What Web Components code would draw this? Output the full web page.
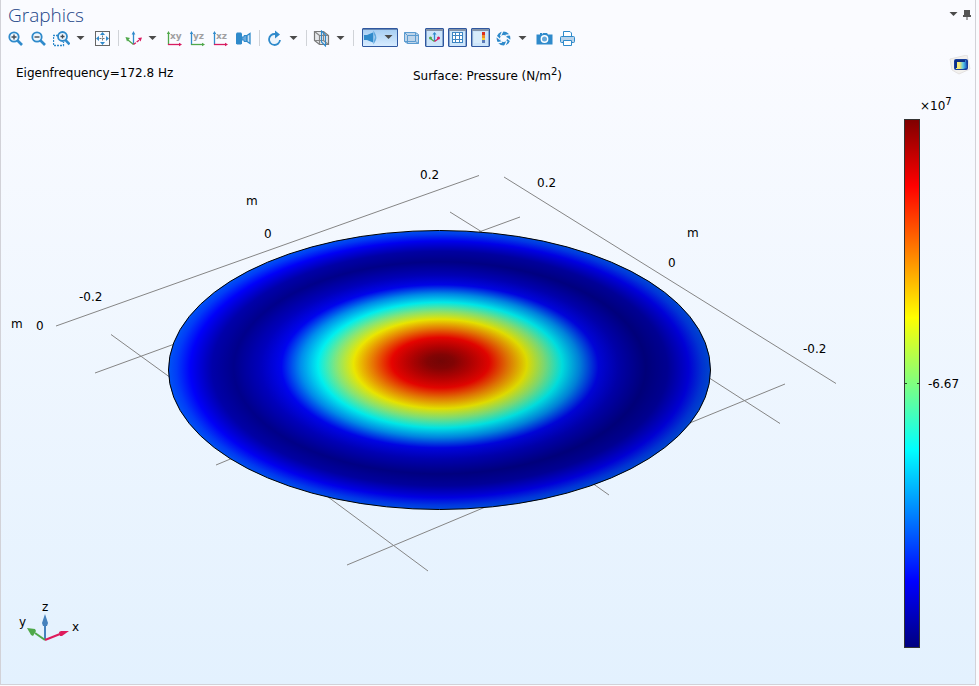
<!DOCTYPE html>
<html lang="en">
<head>
<meta charset="utf-8">
<title>Graphics</title>
<style>
html, body { height: 100%; }
body { margin: 0; background: #fbfbfe; font: 12px "DejaVu Sans", sans-serif; color: #000; }
</style>
</head>
<body>
<graphics-window></graphics-window>
<script>
const BLUE = '#2f8acb';
const GREEN = '#4fa84a', RED = '#d81b60';
const lens = inner => `<circle cx="7" cy="7" r="4.7" fill="#eef6fd" stroke="${BLUE}" stroke-width="1.8"/><path d="M10.5 10.5L15 15" stroke="${BLUE}" stroke-width="2.6"/><path d="${inner}" stroke="#444c54" stroke-width="1.4"/>`;
const plane = (label, up, side) => `<path d="M2.5 15V3" stroke="${up}" stroke-width="1.3"/><path d="M.8 4L2.5 1L4.2 4Z" fill="${up}"/><path d="M2 14.5H14" stroke="${side}" stroke-width="1.3"/><path d="M13 12.8L16 14.5L13 16.2Z" fill="${side}"/><text x="4" y="9" font-family="DejaVu Sans" font-weight="bold" font-size="9" fill="#a0a0a2">${label}</text>`;
const ICONS = {
  zoomIn: lens('M4.5 7H9.5M7 4.5V9.5'),
  zoomOut: lens('M4.5 7H9.5'),
  zoomBox: `<path d="M5 5.5H.5V15.5H10.5V12" stroke="${BLUE}" stroke-width="1.3" stroke-dasharray="2 1"/><circle cx="9.5" cy="6.5" r="4.5" fill="#eef6fd" stroke="${BLUE}" stroke-width="1.8"/><path d="M12.5 10L16.5 14.5" stroke="${BLUE}" stroke-width="2.6"/><path d="M7.5 6.5H11.5M9.5 4.5V8.5" stroke="#444c54" stroke-width="1.3"/>`,
  extents: `<rect x="1.5" y="1.5" width="14" height="14" stroke="#666"/><path d="M8.5 5.5V11.5M5.5 8.5H11.5" stroke="#777" stroke-dasharray="2 1"/><path d="M8.5 2L11 5H6ZM8.5 15L11 12H6ZM2 8.5L5 6V11ZM15 8.5L12 6V11Z" fill="${BLUE}"/>`,
  axes: `<path d="M8.5 14V3" stroke="${BLUE}" stroke-width="1.3"/><path d="M6.7 4.5L8.5 1L10.3 4.5Z" fill="${BLUE}"/><path d="M8.5 14.5L3 10" stroke="${GREEN}" stroke-width="1.3"/><path d="M.5 7L5 8L2 11.5Z" fill="${GREEN}"/><path d="M8.5 14.5L15 9.5" stroke="${RED}" stroke-width="1.3" stroke-dasharray="3 1"/><path d="M17 7.5L13 8L15.5 11.5Z" fill="${RED}"/>`,
  axesSmall: `<path d="M8.5 12V4" stroke="${BLUE}" stroke-width="1.3"/><path d="M6.5 5.5L8.5 3L10.5 5.5Z" fill="${BLUE}"/><path d="M8.5 12.5L5 10M8.5 12.5L5 10" stroke="${GREEN}" stroke-width="1.3"/><circle cx="4.5" cy="9" r="1.5" fill="${GREEN}"/><path d="M8.5 12.5L12 10" stroke="${RED}" stroke-width="1.3"/><circle cx="12.5" cy="9" r="1.5" fill="${RED}"/>`,
  xy: plane('xy', GREEN, RED),
  yz: plane('yz', BLUE, GREEN),
  xz: plane('xz', BLUE, RED),
  view: `<path d="M2 2.5H6L7 3.5V13.5L6 14.5H2L1 13.5V3.5Z" fill="${BLUE}"/><path d="M7 7H9V5.5H12V11.5H9V10H7Z" fill="#6aa9dc" stroke="${BLUE}"/><path d="M12 5.5L15 3.5V13.5L12 11.5Z" fill="#cfe3f5" stroke="${BLUE}" stroke-width="1.3"/>`,
  refresh: `<path d="M9 4A5.5 5.5 0 1 0 14 10" fill="#eef5fc" stroke="${BLUE}" stroke-width="1.8"/><path d="M9 .5L14 4.5L9 8.5Z" fill="${BLUE}"/>`,
  cube: `<path d="M1.5 1.5H10.5L15.5 5.5V14.5H6.5L1.5 10.5Z" fill="#e6e8eb" stroke="#777" stroke-width="1.2"/><path d="M1.5 1.5L6.5 5.5H15.5M6.5 5.5V14.5M10.5 1.5V10.5H1.5M10.5 10.5L15.5 14.500" stroke="#858585" stroke-width="1.2"/><path d="M8.5 1V12L12.5 16V5Z" stroke="${BLUE}" stroke-width="1.1"/>`,
  light: `<path d="M1 6H4L10 3.500V13.500L4 11H1Z" fill="${BLUE}"/><path d="M11 3.500Q14.500 8.500 11 13.500Z" fill="#fff" stroke="#62a9df" stroke-width="1.2"/>`,
  box: `<path d="M1.5 2.5H12.5L15.5 4.5V13.5H4.5L1.5 11.5Z" fill="#bdd4ea" stroke="#5b9bd0"/><path d="M1.5 2.5L4.5 5.5H15.5M4.5 5.5V13.5M12.5 2.5V11.5H1.5M12.5 11.5L15.5 13.5" stroke="#5b9bd0"/>`,
  grid: `<rect x="3" y="3" width="11" height="11" fill="#fff"/><path d="M3.5 3V14M6.5 3V14M10.5 3V14M13.5 3V14M3 3.5H14M3 6.5H14M3 10.5H14M3 13.5H14" stroke="#3d85c2"/>`,
  legend: `<rect x="2" y="3" width="8" height="11" fill="#d8ecfb"/><path d="M10 3H13V6H10Z" fill="#d92f20"/><path d="M10 6H13V9H10Z" fill="#f38b22"/><path d="M10 9H13V11H10Z" fill="#f5d33a"/><path d="M10 11H13V14H10Z" fill="#5b7ab8"/>`,
  aperture: `<circle cx="8.5" cy="8.5" r="5.2" stroke="${BLUE}" stroke-width="3.4"/><path d="M8 .5L5.500 6M16 4.500L10.500 5.500M16.500 11.500L12 8M9.500 16.500L12 11M1.500 13L7 12M.5 5.500L5 9.500" stroke="#fafcff" stroke-width="1.3"/>`,
  camera: `<path d="M1 4.5H4V3H6V4.5L7 3H11L12 4.5H16.5V14.5H.5V4.5Z" fill="${BLUE}"/><circle cx="8.5" cy="9" r="3.2" fill="#67a9da" stroke="#fff" stroke-width="1.4"/>`,
  printer: `<path d="M4.5 6.5V1.5H11L12.5 3V6.5" fill="#fff" stroke="${BLUE}"/><rect x="1.5" y="6.5" width="14" height="6" rx="1" fill="#b9d3ea" stroke="${BLUE}"/><path d="M4.5 10.5H12.5V15.5H4.5Z" fill="#fff" stroke="${BLUE}"/>`,
  caret: `<path d="M4.500 6H12.500L8.500 10Z" fill="#4a4a4a"/>`,
  pin: `<path d="M5 4H11V9H12V11H8.500V14H7.500V11H4V9H5Z" fill="#555"/>`
};

class VectorIcon extends HTMLElement {
  constructor() { super().attachShadow({ mode: 'open' }); }
  connectedCallback() {
    this.shadowRoot.innerHTML = `<style>:host{display:block;flex:none}svg{display:block}</style>
      <svg width="17" height="17" viewBox="0 0 17 17" fill="none" aria-hidden="true">${ICONS[this.getAttribute('name')] || ''}</svg>`;
  }
}
customElements.define('vector-icon', VectorIcon);

class ToolButton extends HTMLElement {
  constructor() { super().attachShadow({ mode: 'open' }); }
  connectedCallback() {
    const label = this.getAttribute('label') || '';
    const pressed = this.hasAttribute('pressed');
    this.shadowRoot.innerHTML = `<style>
      :host{display:block;flex:none;width:23px;height:20px}
      :host([menu]){width:14px;margin-right:4px}
      :host([small]){width:14px}
      :host([wide]){width:36px;margin:0 2px 0 5px}
      button{box-sizing:border-box;width:100%;height:100%;margin:0;padding:0;border:0;background:none;display:flex;align-items:center;justify-content:center}
      :host([pressed]) button{width:19px;height:19px;margin:0 2px;border:1px solid #2f57a0;border-radius:1px;box-shadow:inset 0 2px #8393a9,inset 1px 0 #8ba9cf,inset -1px 0 #8ba9cf;background:#cde5fa}
      :host([wide]) button{width:100%;margin:0;background:linear-gradient(#a5cdf2,#d8ecff);box-shadow:inset 0 1px #6688b5}
    </style><button type="button" aria-label="${label}" title="${label}" ${pressed ? 'aria-pressed="true"' : ''}><slot></slot></button>`;
  }
}
customElements.define('tool-button', ToolButton);

class ToolSeparator extends HTMLElement {
  constructor() {
    super().attachShadow({ mode: 'open' }).innerHTML = `<style>:host{display:block;flex:none;width:1px;height:16px;margin:0 3px 0 4px;background:#d0d3d8}:host([close]){margin-left:2px}</style>`;
  }
}
customElements.define('tool-separator', ToolSeparator);

class PlotToolbar extends HTMLElement {
  constructor() {
    super().attachShadow({ mode: 'open' });
    const b = (icon, label, attrs = '') => `<tool-button label="${label}" ${attrs}><vector-icon name="${icon}"></vector-icon></tool-button>`;
    const menu = label => b('caret', label, 'menu');
    this.shadowRoot.innerHTML = `<style>:host{display:flex;align-items:center;height:20px;padding:0 3px}</style>
      ${b('zoomIn', 'Zoom in')}${b('zoomOut', 'Zoom out')}${b('zoomBox', 'Zoom box')}${menu('Zoom options')}${b('extents', 'Zoom extents')}
      <tool-separator></tool-separator>
      ${b('axes', 'Default view')}${menu('View options')}${b('xy', 'XY view')}${b('yz', 'YZ view')}${b('xz', 'XZ view')}${b('view', 'Projection')}
      <tool-separator></tool-separator>
      ${b('refresh', 'Refresh')}${menu('Refresh options')}
      <tool-separator close></tool-separator>
      ${b('cube', 'Clip planes')}${menu('Clip options')}
      <tool-separator close></tool-separator>
      <tool-button label="Scene light" pressed wide><vector-icon name="light"></vector-icon><vector-icon name="caret"></vector-icon></tool-button>
      ${b('box', 'Transparency')}${b('axesSmall', 'Show axes', 'pressed')}${b('grid', 'Show grid', 'pressed')}${b('legend', 'Show legends', 'pressed')}
      ${b('aperture', 'Environment')}${menu('Environment options')}${b('camera', 'Snapshot')}${b('printer', 'Print')}`;
  }
}
customElements.define('plot-toolbar', PlotToolbar);

class SurfaceScene extends HTMLElement {
  constructor() {
    super().attachShadow({ mode: 'open' }).innerHTML = `<style>
      :host{display:block;min-width:0;min-height:0}
      svg{display:block;width:100%;height:100%}
      text{font:12px "DejaVu Sans",sans-serif;fill:#000}
    </style>
    <svg viewBox="1 90 884 594" preserveAspectRatio="xMidYMid meet" role="img" aria-label="Pressure on a circular surface">
      <defs>
        <radialGradient id="pressure" cx=".5" cy=".5" r=".5" fx=".502" fy=".468">
          <stop offset="0" stop-color="#7c0505"/><stop offset=".05" stop-color="#8c0404"/>
          <stop offset=".11" stop-color="#bc0202"/><stop offset=".18" stop-color="#f40400"/>
          <stop offset=".25" stop-color="#f47e04"/><stop offset=".32" stop-color="#f6f200"/>
          <stop offset=".385" stop-color="#88f080"/><stop offset=".45" stop-color="#00f8f8"/>
          <stop offset=".515" stop-color="#0090f4"/><stop offset=".585" stop-color="#0004f4"/>
          <stop offset=".66" stop-color="#0000c0"/><stop offset=".76" stop-color="#00008c"/>
          <stop offset=".84" stop-color="#0000aa"/><stop offset=".92" stop-color="#0000fa"/>
          <stop offset=".97" stop-color="#003cf8"/><stop offset="1" stop-color="#0054f4"/>
        </radialGradient>
        <linearGradient id="shade" x1="0" y1=".35" x2="1" y2=".65">
          <stop offset=".1" stop-opacity="0"/><stop offset="1" stop-opacity=".17"/>
        </linearGradient>
      </defs>
      <path fill="none" stroke="#858585" d="M56 326L479 175.5M504 177L836 383.5M450 212L482 232M479 232L520 217M111 334.5L171 378M95 373L180 342M785 384L680 427M700 372L780 423.5M216 465L240 455M347 565L495 503M320 491L428 571M585 478L609 495"/>
      <ellipse cx="439.5" cy="370" rx="271" ry="139.5" fill="url(#pressure)"/>
      <ellipse cx="439.5" cy="370" rx="271" ry="139.5" fill="url(#shade)" stroke="#000"/>
      <text x="420" y="179">0.2</text><text x="246" y="205">m</text><text x="264" y="238">0</text>
      <text x="79" y="301">-0.2</text><text x="11" y="328">m</text><text x="36" y="330">0</text>
      <text x="537" y="187">0.2</text><text x="687" y="237">m</text><text x="668" y="267">0</text><text x="803" y="353">-0.2</text>
      <g fill="none" stroke-width="2"><path d="M45 640V626" stroke="#4581bd"/><path d="M45 640L35 633" stroke="#4fa84a"/><path d="M45 640L60 634" stroke="#de1b5c"/></g>
      <path d="M45 614L48 623L47 626H43L42 623Z" fill="#4581bd"/><path d="M27 628L35 629L36 631L33 636L31 635Z" fill="#4fa84a"/><path d="M69 631L62 636L60 636L59 632L61 631Z" fill="#de1b5c"/>
      <text x="42" y="611">z</text><text x="19" y="626">y</text><text x="72" y="631">x</text>
    </svg>`;
  }
}
customElements.define('surface-scene', SurfaceScene);

class ColorLegend extends HTMLElement {
  constructor() {
    super().attachShadow({ mode: 'open' }).innerHTML = `<style>
      :host{display:grid;grid-template:29px 1fr / 16px 1fr;padding:0 0 36px 19px;box-sizing:border-box;min-height:0}
      .scale{grid-column:2;padding-top:6px;line-height:20px;white-space:nowrap}
      sup{font-size:10px;line-height:0;vertical-align:5px}
      .bar{grid-column:1;box-sizing:border-box;border:1px solid #333;display:flex;align-items:center;justify-content:space-between;
        background:linear-gradient(#800000,#f00 12.5%,#ff0 37.5%,#0ff 62.5%,#00f 87.5%,#000080)}
      i{width:2px;height:1px;background:#234b23}
      .tick{display:flex;align-items:center;padding-left:8px}
    </style><div class="scale">×10<sup>7</sup></div><div class="bar"><i></i><i></i></div><div class="tick">-6.67</div>`;
  }
}
customElements.define('color-legend', ColorLegend);

class GraphicsWindow extends HTMLElement {
  constructor() {
    super().attachShadow({ mode: 'open' }).innerHTML = `<style>
      :host{display:block;box-sizing:border-box;height:100%;padding:0 3px 1px 0}
      .panel{box-sizing:border-box;height:100%;display:flex;flex-direction:column;border:solid #d2d2d8;border-width:0 1px 1px;background:#fafbff}
      header{display:flex;height:28px;padding:0 1px 0 7px}
      h1{margin:0;flex:1;font:300 19px/30px "Open Sans",sans-serif;color:#1c4587}
      .controls{display:flex;padding-top:4px}
      main{flex:1;min-height:0;display:grid;grid-template:42px minmax(0,1fr) / minmax(0,1fr) 90px;background:linear-gradient(#fafbff,#e3f1fe)}
      .captions{grid-column:1 / -1;display:grid;grid-template-columns:1fr auto 1fr;line-height:20px;padding:15px 4px 0 15px}
      .name{padding:1px 12px 0 0;margin-top:2px}
      .captions>:last-child{justify-self:end}
      sup{font-size:10px;line-height:0;vertical-align:5px}
      .captions svg{display:block;margin-top:-8px}
    </style>
    <section class="panel" aria-label="Graphics">
      <header><h1>Graphics</h1><div class="controls">
        <tool-button small label="Window menu"><vector-icon name="caret"></vector-icon></tool-button>
        <tool-button small label="Pin window"><vector-icon name="pin"></vector-icon></tool-button></div></header>
      <plot-toolbar></plot-toolbar>
      <main>
        <div class="captions"><span>Eigenfrequency=172.8 Hz</span><span class="name">Surface: Pressure (N/m<sup>2</sup>)</span>
          <svg width="22" height="20" viewBox="0 0 22 20" aria-hidden="true">
            <defs><linearGradient id="g"><stop offset="0" stop-color="#fff27a"/><stop offset=".35" stop-color="#f2e678"/><stop offset=".65" stop-color="#58c8e8"/><stop offset="1" stop-color="#1a58c0"/></linearGradient></defs>
            <path d="M1 4L18 0L21 14L10 19L3 15Z" fill="#f3f1ee" stroke="#e4e2e2"/><rect x="5" y="4" width="14" height="11" rx="2" fill="#173f9c"/><path d="M7 7L9 6L17 5L18 13L14 14H7Z" fill="url(#g)"/><path d="M6 5H16V7H8V13H6Z" fill="#0e2f86"/>
          </svg></div>
        <surface-scene></surface-scene>
        <color-legend></color-legend>
      </main>
    </section>`;
  }
}
customElements.define('graphics-window', GraphicsWindow);
</script>
</body>
</html>
